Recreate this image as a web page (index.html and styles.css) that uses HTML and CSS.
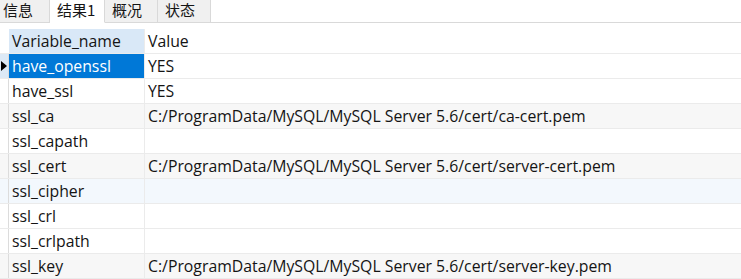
FILE: index.html
```html
<!DOCTYPE html>
<html>
<head>
<meta charset="utf-8">
<link rel="stylesheet" href="styles.css">
</head>
<body>
<div class="tabs">
  <div class="tab">信息</div>
  <div class="tab active">结果1</div>
  <div class="tab">概况</div>
  <div class="tab">状态</div>
  <div class="tab-fill"></div>
</div>
<div class="grid">
  <div class="row head">
    <div class="ind"></div>
    <div class="c1 hsel">Variable_name</div>
    <div class="c2">Value</div>
  </div>
  <div class="row">
    <div class="ind cur"><span class="arrow"></span></div>
    <div class="c1 sel">have_openssl</div>
    <div class="c2">YES</div>
  </div>
  <div class="row">
    <div class="ind"></div>
    <div class="c1">have_ssl</div>
    <div class="c2">YES</div>
  </div>
  <div class="row alt">
    <div class="ind"></div>
    <div class="c1">ssl_ca</div>
    <div class="c2">C:/ProgramData/MySQL/MySQL Server 5.6/cert/ca-cert.pem</div>
  </div>
  <div class="row">
    <div class="ind"></div>
    <div class="c1">ssl_capath</div>
    <div class="c2"></div>
  </div>
  <div class="row alt">
    <div class="ind"></div>
    <div class="c1">ssl_cert</div>
    <div class="c2">C:/ProgramData/MySQL/MySQL Server 5.6/cert/server-cert.pem</div>
  </div>
  <div class="row hover">
    <div class="ind"></div>
    <div class="c1">ssl_cipher</div>
    <div class="c2"></div>
  </div>
  <div class="row">
    <div class="ind"></div>
    <div class="c1">ssl_crl</div>
    <div class="c2"></div>
  </div>
  <div class="row">
    <div class="ind"></div>
    <div class="c1">ssl_crlpath</div>
    <div class="c2"></div>
  </div>
  <div class="row alt">
    <div class="ind"></div>
    <div class="c1">ssl_key</div>
    <div class="c2">C:/ProgramData/MySQL/MySQL Server 5.6/cert/server-key.pem</div>
  </div>
</div>
</body>
</html>
```
FILE: styles.css
```css
html, body {
  margin: 0;
  padding: 0;
  background: #ffffff;
}
body {
  font-family: "Open Sans", "Noto Sans CJK SC", sans-serif;
  font-size: 15.8px;
  color: #141414;
  width: 741px;
  height: 279px;
  overflow: hidden;
}
.tabs {
  display: flex;
  height: 23px;
}
.tab {
  box-sizing: border-box;
  height: 23px;
  background: #f0f0f0;
  border-right: 1px solid #d9d9d9;
  border-bottom: 1px solid #d9d9d9;
  font-family: "Noto Sans CJK SC", sans-serif;
  font-size: 15px;
  line-height: 20px;
  padding: 0 0 0 3px;
  width: 50px;
}
.tab.active {
  background: #ffffff;
  border-bottom: 1px solid #ffffff;
  width: 55px;
  padding-left: 7px;
}
.tab:nth-child(3) { width: 53px; padding-left: 7px; }
.tab:nth-child(4) { width: 53px; padding-left: 7px; }
.tab-fill {
  flex: 1;
  border-bottom: 1px solid #d9d9d9;
}
.grid {
  margin-top: 6px;
}
.row {
  display: flex;
  height: 25px;
  box-sizing: border-box;
  border-bottom: 1px solid #ebebeb;
}
.ind {
  width: 8px;
  flex: none;
  border-right: 1px solid #dcdcdc;
  position: relative;
}
.head .ind {
  border-right: none;
  width: 9px;
}
.ind.cur {
  background: #dce9f6;
}
.arrow {
  position: absolute;
  left: 1px;
  top: 7px;
  width: 0;
  height: 0;
  border-top: 5px solid transparent;
  border-bottom: 5px solid transparent;
  border-left: 6px solid #000000;
}
.c1 {
  width: 136px;
  flex: none;
  box-sizing: border-box;
  border-right: 1px solid #ebebeb;
  padding-left: 3px;
  line-height: 24px;
  white-space: nowrap;
}
.c2 {
  flex: 1;
  padding-left: 3px;
  line-height: 24px;
  white-space: nowrap;
}
.hsel {
  background: #d9e8f7;
}
.sel {
  background: #0078d7;
  color: #ffffff;
}
.row.alt {
  background: #f7f7f7;
}
.row.hover {
  background: #f3f8fd;
}
```
